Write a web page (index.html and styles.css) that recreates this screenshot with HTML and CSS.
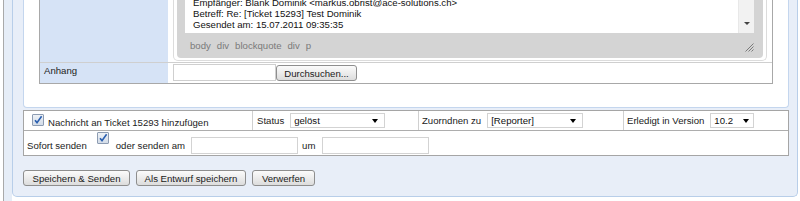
FILE: index.html
```html
<!DOCTYPE html>
<html lang="de">
<head>
<meta charset="utf-8">
<title>Ticket</title>
<link rel="stylesheet" href="styles.css">
</head>
<body>
<div class="page">
  <div class="rail"></div>
  <div class="panel">
    <div class="editbox">
      <div class="formtable">
        <div class="row row-editor">
          <div class="label"></div>
          <div class="cell cell-editor">
            <div class="editor">
              <div class="frame">
                <div class="content">
                  <div class="text">
                    <p>Empfänger: Blank Dominik &lt;markus.obrist@ace-solutions.ch&gt;</p>
                    <p>Betreff: Re: [Ticket 15293] Test Dominik</p>
                    <p>Gesendet am: 15.07.2011 09:35:35</p>
                  </div>
                  <div class="scrollbar"><span class="sb-arrow"></span></div>
                </div>
                <div class="statusbar">
                  <span class="path">body</span>
                  <span class="path">div</span>
                  <span class="path">blockquote</span>
                  <span class="path">div</span>
                  <span class="path">p</span>
                  <svg class="grip" width="10" height="10" viewBox="0 0 10 10">
                    <path d="M9.5 1.5 L1.5 9.5 M9.5 4.5 L4.5 9.5 M9.5 7.5 L7.5 9.5" stroke="#7a7a7a" stroke-width="1" fill="none"/>
                  </svg>
                </div>
              </div>
            </div>
          </div>
        </div>
        <div class="row row-attach">
          <div class="label">Anhang</div>
          <div class="cell cell-attach">
            <span class="fileinput"></span>
            <span class="btn btn-file">Durchsuchen...</span>
          </div>
        </div>
      </div>
    </div>

    <div class="options">
      <div class="opt-row opt-row1">
        <div class="opt-cell c1">
          <span class="check"><svg width="10" height="10" viewBox="0 0 10 10"><path d="M2 5.2 L4 7.6 L8.6 1.2" stroke="#2a5fb0" stroke-width="1.6" fill="none"/></svg></span>
          <span class="cb-label">Nachricht an Ticket 15293 hinzufügen</span>
        </div>
        <div class="opt-cell c2">
          <span class="opt-label">Status</span>
          <span class="select sel-status">gelöst<span class="arr"></span></span>
        </div>
        <div class="opt-cell c3">
          <span class="opt-label">Zuorndnen zu</span>
          <span class="select sel-assign">[Reporter]<span class="arr"></span></span>
        </div>
        <div class="opt-cell c4">
          <span class="opt-label">Erledigt in Version</span>
          <span class="select sel-version">10.2<span class="arr"></span></span>
        </div>
      </div>
      <div class="opt-row opt-row2">
        <span class="r2-text t-sofort">Sofort senden</span>
        <span class="check check2"><svg width="10" height="10" viewBox="0 0 10 10"><path d="M2 5.2 L4 7.6 L8.6 1.2" stroke="#2a5fb0" stroke-width="1.6" fill="none"/></svg></span>
        <span class="r2-text t-oder">oder senden am</span>
        <span class="textinput"></span>
        <span class="r2-text t-um">um</span>
        <span class="textinput ti-time"></span>
      </div>
    </div>

    <div class="actions">
      <span class="btn b-save">Speichern &amp; Senden</span>
      <span class="btn b-draft">Als Entwurf speichern</span>
      <span class="btn b-discard">Verwerfen</span>
    </div>
  </div>
</div>
</body>
</html>
```

FILE: styles.css
```css
* { box-sizing: border-box; }
html, body { margin: 0; padding: 0; }
body {
  background: #fff;
  font-family: "Liberation Sans", Arial, sans-serif;
  font-size: 9.6px;
  color: #222;
  line-height: 11px;
}
p { margin: 0; }

.page {
  display: flex;
  height: 201px;
  overflow: hidden;
}
.rail {
  margin-left: 3px;
  width: 9px;
  border-left: 1px solid #a9a9a9;
  background: #e6edf7;
}
.panel {
  width: 786px;
  height: 197px;
  border: 1px solid #b8cee9;
  border-top: 0;
  border-radius: 0 0 5px 5px;
  background: #e8eef8;
  padding: 0 8px 0 10px;
  display: flex;
  flex-direction: column;
}

/* upper white box */
.editbox {
  height: 108px;
  border: 1px solid #c4d6ee;
  border-top: 0;
  border-radius: 0 0 4px 4px;
  background: #fff;
  padding: 0 15px;
}
.formtable {
  width: 734px;
  border: 1px solid #a8a8a8;
  border-top: 0;
}
.row {
  display: grid;
  grid-template-columns: 128px 1fr;
}
.row-editor {
  height: 63px;
  border-bottom: 1px solid #cfcfcf;
}
.row-attach { height: 20px; }
.label {
  background: #d6e3f6;
  padding: 2px 0 0 4px;
}
.cell-editor { padding: 0 5px 1px 5px; }
.editor {
  height: 61px;
  border: 1px solid #dcdcdc;
  border-top: 0;
  border-radius: 0 0 5px 5px;
  padding: 0 3px 2px 3px;
}
.frame {
  height: 58px;
  background: #d4d4d4;
  border-radius: 0 0 4px 4px;
  padding: 0 9px 0 8px;
  display: flex;
  flex-direction: column;
}
.content {
  height: 33px;
  background: #fff;
  display: flex;
  overflow: hidden;
}
.text {
  flex: 1;
  display: flex;
  flex-direction: column;
  justify-content: flex-end;
  padding: 0 0 3px 8px;
  color: #111;
  white-space: nowrap;
  overflow: hidden;
}
.scrollbar {
  width: 16px;
  background: #f2f2f2;
  border-left: 1px solid #e8e8e8;
  position: relative;
}
.sb-arrow {
  position: absolute;
  left: 5px;
  bottom: 8px;
  width: 0;
  height: 0;
  border-left: 3px solid transparent;
  border-right: 3px solid transparent;
  border-top: 3px solid #444;
}
.statusbar {
  position: relative;
  flex: 1;
  display: flex;
  align-items: center;
  padding-left: 5px;
  gap: 6px;
  color: #7a7a7a;
}
.grip {
  position: absolute;
  right: 0;
  bottom: 6px;
}

.cell-attach {
  display: flex;
  align-items: flex-start;
  padding-left: 5px;
}
.fileinput {
  width: 103px;
  height: 17px;
  margin-top: 1px;
  border: 1px solid #cfcfcf;
  background: #fff;
}
.btn {
  display: inline-flex;
  align-items: center;
  justify-content: center;
  height: 16px;
  border: 1px solid #8e8e8e;
  border-radius: 3px;
  background: linear-gradient(#fbfbfb, #ececec 50%, #dcdcdc);
  color: #1a1a1a;
  white-space: nowrap;
}
.btn-file {
  width: 81px;
  margin-top: 2px;
}

/* options table */
.options {
  margin-top: 2px;
  width: 766px;
  border: 1px solid #a5a5a5;
  background: #fff;
}
.opt-row1 {
  display: grid;
  grid-template-columns: 229px 166px 205px 1fr;
  height: 20px;
  border-bottom: 1px solid #adadad;
}
.opt-cell {
  display: flex;
  align-items: center;
  border-right: 1px solid #d0d0d0;
}
.opt-cell.c4 { border-right: 0; }
.c1 {
  align-items: flex-start;
  padding: 3px 0 0 8px;
}
.c2 { padding-left: 4px; }
.c3 { padding-left: 3px; }
.c4 { padding-left: 3px; }
.cb-label { margin: 3px 0 0 4px; }
.opt-label { margin-right: 6px; }
.check {
  width: 12px;
  height: 12px;
  border: 1px solid #8d9cb2;
  border-radius: 1px;
  background: linear-gradient(#eef2f7, #d3dce8);
  display: inline-flex;
  align-items: center;
  justify-content: center;
  flex: none;
}
.select {
  position: relative;
  height: 15px;
  border: 1px solid #d3d3d3;
  background: #fff;
  padding-left: 3px;
  display: inline-flex;
  align-items: center;
  color: #111;
}
.sel-status { width: 95px; }
.sel-assign { width: 96px; }
.sel-version { width: 44px; }
.arr {
  position: absolute;
  right: 6px;
  top: 5px;
  width: 0;
  height: 0;
  border-left: 3.5px solid transparent;
  border-right: 3.5px solid transparent;
  border-top: 4px solid #000;
}
.sel-version .arr { right: 4px; }

.opt-row2 {
  height: 24px;
  display: flex;
  align-items: flex-start;
  padding-left: 3px;
}
.r2-text { margin-top: 9px; }
.check2 { margin: 1px 0 0 10px; }
.t-oder { margin-left: 7px; }
.textinput {
  width: 107px;
  height: 17px;
  margin: 6px 0 0 6px;
  border: 1px solid #d3d3d3;
  background: #fff;
}
.t-um { margin-left: 4px; }
.ti-time { margin-left: 7px; }

.actions {
  display: flex;
  gap: 6px;
  margin-top: 14px;
}
.b-save { width: 107px; }
.b-draft { width: 110px; }
.b-discard { width: 63px; }
```
